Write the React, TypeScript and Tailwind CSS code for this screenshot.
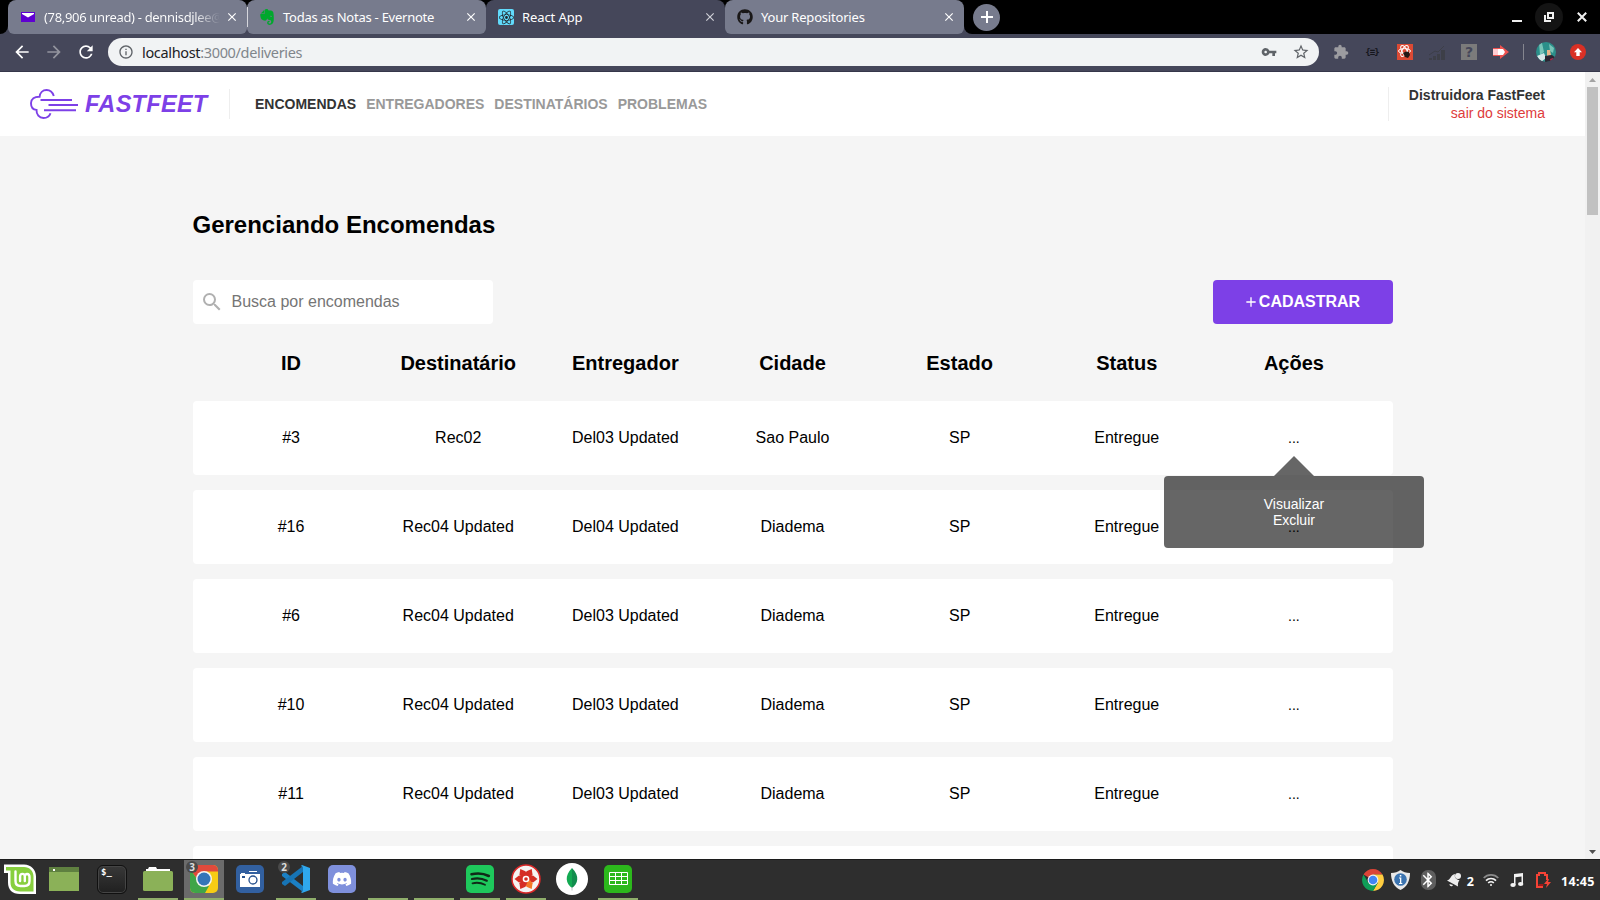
import type { ReactNode } from 'react'
import {
  MdAdd, MdArrowBack, MdArrowForward, MdBluetooth, MdClose, MdExtension,
  MdInfoOutline, MdRefresh, MdSearch, MdStarBorder, MdVpnKey,
} from 'react-icons/md'
import { FaGithub, FaDiscord } from 'react-icons/fa'
import { SiEvernote, SiReact } from 'react-icons/si'

const columns = ['ID', 'Destinatário', 'Entregador', 'Cidade', 'Estado', 'Status', 'Ações']

const deliveries = [
  ['#3', 'Rec02', 'Del03 Updated', 'Sao Paulo', 'SP', 'Entregue'],
  ['#16', 'Rec04 Updated', 'Del04 Updated', 'Diadema', 'SP', 'Entregue'],
  ['#6', 'Rec04 Updated', 'Del03 Updated', 'Diadema', 'SP', 'Entregue'],
  ['#10', 'Rec04 Updated', 'Del03 Updated', 'Diadema', 'SP', 'Entregue'],
  ['#11', 'Rec04 Updated', 'Del03 Updated', 'Diadema', 'SP', 'Entregue'],
]

function Tab({ icon, title, active }: { icon: ReactNode; title: ReactNode; active?: boolean }) {
  return (
    <div className={`flex h-[34px] w-[239px] shrink-0 items-center rounded-t-lg pl-[12px] pr-[8px] ${active ? 'bg-[#45475a]' : 'rounded-b-md bg-[#777b8d]'}`}>
      <span className="flex w-4 shrink-0 justify-center">{icon}</span>
      <span className="ml-2 w-[176px] whitespace-nowrap text-[13px] leading-[34px] text-white">{title}</span>
      <MdClose className={`ml-auto size-[14px] shrink-0 ${active ? 'text-[#d0d1d8]' : 'text-white'}`} />
    </div>
  )
}

function Browser() {
  return (
    <div className="shrink-0 bg-[#45475a] font-['Noto_Sans',sans-serif]">
      <div className="flex h-[34px] items-center">
        <div className="h-full w-2 rounded-br-lg bg-black" />
        <div className="flex h-full bg-[linear-gradient(#000_0_50%,#45475a_50%)]">
          <Tab
            title={<span className="block bg-[linear-gradient(90deg,#fff_85%,transparent_100%)] bg-clip-text tracking-[-0.33px] text-transparent">(78,906 unread) - dennisdjlee@</span>}
            icon={<svg width="14" height="10" viewBox="0 0 14 10"><path fill="#5f01d1" d="M0 0h14v10H0z" /><path fill="#fff" d="M1 1h12v1L7 5.5 1 2z" /></svg>}
          />
          <div className="z-10 my-[7px] -mr-px w-px bg-[#d5d6dc]" />
          <Tab title={<span className="tracking-[-0.25px]">Todas as Notas - Evernote</span>} icon={<SiEvernote className="size-4 text-[#00a82d]" />} />
          <Tab
            active
            title={<span className="tracking-[-0.1px]">React App</span>}
            icon={<span className="flex size-4 items-center justify-center rounded-[2px] bg-[#61dafb]"><SiReact className="size-[15px] text-[#20232a]" /></span>}
          />
          <Tab title={<span className="tracking-[-0.2px]">Your Repositories</span>} icon={<FaGithub className="size-4 text-[#191717]" />} />
        </div>
        <div className="flex h-full flex-1 items-center rounded-bl-lg bg-black pl-[9px] pr-[13px]">
          <span className="flex size-[27px] items-center justify-center rounded-full bg-[#777b8d] text-white">
            <svg width="12" height="12" viewBox="0 0 12 12" stroke="currentColor" strokeWidth="2"><path d="M6 0v12M0 6h12" /></svg>
          </span>
          <span className="ml-auto mt-[8px] h-[2px] w-[10px] bg-[#eee]" />
          <span className="ml-[13px] flex size-7 items-center justify-center rounded-full bg-[#141414]">
            <svg width="10" height="10" viewBox="0 0 10 10" fill="none" stroke="#f1f1f1" strokeWidth="2"><path d="M4 1h5v5H4zM1 3v6h6" /></svg>
          </span>
          <svg className="ml-[14px]" width="10" height="10" viewBox="0 0 10 10" stroke="#f1f1f1" strokeWidth="2"><path d="m.8.8 8.4 8.4M9.2.8.8 9.2" /></svg>
        </div>
      </div>
      <div className="flex h-[38px] items-center border-b border-[#35374a] pb-px pl-[12px] text-white">
        <MdArrowBack className="size-5" />
        <MdArrowForward className="ml-3 size-5 text-[#93949e]" />
        <MdRefresh className="ml-3 size-5" />
        <div className="ml-3 flex h-7 w-[1211px] items-center rounded-full bg-[#f1f3f4] pl-[10px] pr-[9px] text-[#5f6368]">
          <MdInfoOutline className="size-4" />
          <span className="ml-[8px] text-[14.5px] leading-[26px] tracking-[-0.34px] text-[#80868b]"><span className="text-[#202124]">localhost</span>:3000/deliveries</span>
          <MdVpnKey className="ml-auto size-4" />
          <MdStarBorder className="ml-[15px] size-[18px]" />
        </div>
        <MdExtension className="ml-[14px] size-4 text-[#9c9ca0]" />
        <span className="ml-[15px] flex w-4 items-center justify-center whitespace-nowrap font-['DejaVu_Sans_Mono',monospace] text-[9px] font-bold leading-4 tracking-[-1px] text-[#15161c]">{'{≡}'}</span>
        <span className="ml-[17px] flex size-4 items-center justify-center bg-[#db4a34]">
          <svg width="16" height="16" viewBox="0 0 16 16" fill="none" stroke="#fff"><ellipse cx="7.500" cy="7" rx="6" ry="2.400" /><ellipse cx="7.500" cy="7" rx="6" ry="2.400" transform="rotate(60 7.500 7)" /><ellipse cx="7.500" cy="7" rx="6" ry="2.400" transform="rotate(120 7.500 7)" /><path stroke="none" fill="#231815" d="M6 9l3-1.500L12 8l1 3-2 3-3-1z" /></svg>
        </span>
        <svg className="ml-[16px]" width="16" height="16" viewBox="0 0 16 16" fill="#3d3f48"><path d="M0 14h3v2H0zM4 12h3v4H4zM8 10h3v6H8zM12 6h4v10h-4z" /><path d="M0 11 6 7l3 1 6-6" fill="none" stroke="#3d3f48" /></svg>
        <span className="ml-[16px] flex size-4 items-center justify-center bg-[#7b7b7b] font-['DejaVu_Sans',sans-serif] text-[14px] font-bold leading-4 text-[#45475a]">?</span>
        <svg className="ml-[16px]" width="16" height="14" viewBox="0 0 16 14"><path fill="#ef5350" d="M0 3h7V0l9 7-9 7v-3H0z" /><path fill="#ffcdd2" d="M0 4h5v6H0z" /><path fill="#fff" d="M5 4h5l2 3-2 3H5z" /></svg>
        <span className="ml-[14px] h-4 w-px bg-[#85868f]" />
        <svg className="ml-[12px]" width="20" height="20" viewBox="0 0 20 20">
          <clipPath id="avatar"><circle cx="10" cy="10" r="10" /></clipPath>
          <g clipPath="url(#avatar)"><path fill="#2b8f8a" d="M0 0h20v20H0z" /><path fill="#78c4b8" d="M3 1h3l2 9-4 3zM13 2l5 4-1 5-3-2z" /><path fill="#d8e8e8" d="M1 14l7-3 2 5-5 4z" /><path fill="#e8b489" d="M11 8h3l1 5-4 1z" /><path fill="#2c2632" d="M9 14l7-1 4 3-4 4H9z" /><path fill="#b3264d" d="m14 17 3-1 1 3-3 1z" /></g>
        </svg>
        <span className="ml-[14px] flex size-4 items-center justify-center rounded-full bg-[#d93025]"><svg width="8" height="8" viewBox="0 0 8 8" fill="#fff"><path d="m4 0 4 4.200H5.700V8H2.300V4.200H0z" /></svg></span>
      </div>
    </div>
  )
}

function Logo() {
  return (
    <div className="flex items-center">
      <svg width="48" height="30" viewBox="0 0 48 30" fill="none" stroke="#7d40e7" strokeWidth="1.900">
        <path d="M23.800 7C22.600 3.300 20 1 16.600 1c-3.900 0-6.700 2.800-7 6.700C4.500 7.500 1 10 1 14.200c0 4 2.400 6.400 5.500 6.700-.2 4.700 2.700 8.100 7 8.100 3.500 0 6-1.700 7-4.800" />
        <path d="M10.500 11H42M18.500 16H48M14 21.300h32" />
      </svg>
      <span className="ml-[7px] w-[124px] whitespace-nowrap text-[23.500px] font-bold italic leading-[30px] tracking-[0.3px] text-[#7d40e7]">FASTFEET</span>
    </div>
  )
}

function Header() {
  return (
    <header className="flex h-16 items-center bg-white pl-[30px] pr-[40px] text-[14px] font-bold">
      <Logo />
      <div className="ml-[20px] h-[30px] w-px bg-[#eee]" />
      <nav className="ml-[25px] flex gap-[10px] text-[#999]">
        <a className="text-[#333]">ENCOMENDAS</a>
        <a>ENTREGADORES</a>
        <a>DESTINATÁRIOS</a>
        <a>PROBLEMAS</a>
      </nav>
      <div className="ml-auto flex h-[34px] flex-col justify-center border-l border-[#eee] pl-[20px] text-right leading-[16px]">
        <strong className="text-[#333]">Distruidora FastFeet</strong>
        <span className="mt-[2px] font-normal text-[#de3b3b]">sair do sistema</span>
      </div>
    </header>
  )
}

function ActionMenu() {
  return (
    <div className="absolute left-1/2 top-[75px] z-10 flex h-[72px] w-[260px] -translate-x-1/2 flex-col items-center rounded bg-black/60 pt-[20px] text-[14px] leading-[16px] text-white">
      <svg className="absolute -top-[20px] left-[110px]" width="40" height="20"><path d="M20 0 40 20H0z" fill="rgba(0,0,0,.6)" /></svg>
      <span>Visualizar</span>
      <span>Excluir</span>
    </div>
  )
}

function Page() {
  return (
    <div className="h-full min-w-0 flex-1 overflow-hidden bg-[#f5f5f5]">
      <Header />
      <main className="ml-[192.5px] flex w-[1200px] flex-col pt-[74px]">
        <h1 className="text-[24px] font-bold leading-[30px] text-black">Gerenciando Encomendas</h1>
        <div className="mt-[40px] flex justify-between">
          <div className="flex h-11 w-[300px] items-center rounded bg-white pl-[7px] text-[16px] text-[#757575]">
            <MdSearch className="size-6 text-[#b0b0b0]" />
            <span className="ml-[8px]">Busca por encomendas</span>
          </div>
          <button className="flex h-11 w-[180px] items-center justify-center rounded bg-[#7d40e7] pr-[2px] text-[16px] font-bold text-white">
            <MdAdd className="size-4" />CADASTRAR
          </button>
        </div>
        <div className="mt-[24px] grid grid-cols-7 px-[15px] text-center text-[20px] font-bold leading-[30px] text-black">
          {columns.map((c) => <span key={c}>{c}</span>)}
        </div>
        <div className="mt-[23px] flex flex-col gap-[15px]">
          {deliveries.map((d, i) => (
            <div key={d[0]} className="grid h-[74px] grid-cols-7 rounded bg-white px-[15px] text-center text-[16px] leading-[73px] text-black">
              {d.map((v, j) => <span key={j}>{v}</span>)}
              <span className="relative">
                <span className="text-[14px]">...</span>
                {i === 0 && <ActionMenu />}
              </span>
            </div>
          ))}
          <div className="h-[74px] rounded bg-white" />
        </div>
      </main>
    </div>
  )
}

function Scrollbar() {
  return (
    <div className="flex h-full w-[15px] shrink-0 flex-col items-center bg-[#f1f1f1]">
      <svg width="15" height="15" viewBox="0 0 15 15"><path fill="#a3a3a3" d="M4 10h7L7.500 6z" /></svg>
      <div className="h-[128px] w-[11px] bg-[#c1c1c1]" />
      <svg className="mt-auto" width="15" height="15" viewBox="0 0 15 15"><path fill="#505050" d="M4 6h7l-3.500 4z" /></svg>
    </div>
  )
}

function Chrome({ size }: { size: number }) {
  return (
    <svg width={size} height={size} viewBox="0 0 22 22">
      <path fill="#db4437" d="M11 11 1.500 5.500A11 11 0 0 1 20.500 5.500H11z" />
      <path fill="#ffcd40" d="M20.500 5.500A11 11 0 0 1 11 22l4.800-8.200L11 5.500z" />
      <path fill="#0f9d58" d="M1.500 5.500A11 11 0 0 0 11 22l4.800-8.200H6.300z" />
      <circle cx="11" cy="11" r="5.400" fill="#f4f4f4" /><circle cx="11" cy="11" r="4.300" fill="#4285f4" />
    </svg>
  )
}

function Task({ children, open, active, badge }: { children?: ReactNode; open?: boolean; active?: boolean; badge?: string }) {
  return (
    <div className={`relative flex h-10 w-10 shrink-0 items-center justify-center border-b-2 ${open ? 'border-[#8fae6b]' : 'border-transparent'} ${active ? 'bg-[#6b6b6b]' : ''}`}>
      {children}
      {badge && <span className="absolute left-[2px] top-px flex size-3 items-center justify-center rounded-full bg-[#4a4a4a] text-[10px] font-bold leading-3 text-[#ddd]">{badge}</span>}
    </div>
  )
}

function Taskbar() {
  return (
    <div className="flex h-[41px] shrink-0 items-center border-t border-[#1c1c1c] bg-[#2e2e2e] font-['Noto_Sans',sans-serif]">
      <div className="flex gap-[6px]">
        <Task>
          <svg width="32" height="30" viewBox="0 0 32 30"><path fill="#fff" d="M0 .5h20c7 0 12 5 12 12V30H16C8 30 4 25.500 4 18.500V9H0z" /><path fill="#87cf3e" d="M2 3h18c5.500 0 9.500 4 9.500 9.500v15H16c-6 0-9.500-3.500-9.500-9V6.500H2z" /><path fill="none" stroke="#fff" strokeWidth="2.400" strokeLinecap="round" strokeLinejoin="round" d="M11.500 7.500v9.500c0 3.500 2 5 5 5h4c3.500 0 5-2 5-5v-4c0-4-4.700-4-4.700-.5V17v-4.500c0-3.500-4.700-3.500-4.700 0V17" /></svg>
        </Task>
        <Task>
          <svg className="mr-1" width="30" height="24" viewBox="0 0 30 24"><path fill="#8bb158" d="M0 0h30v24H0z" /><path fill="#5f8040" d="M0 0h30v5H0z" /><path fill="#fff" d="M4 2h2v2H4z" /></svg>
        </Task>
        <Task>
          <span className="h-[29px] w-[30px] rounded-[6px] border border-[#101010] bg-linear-to-b from-[#383838] to-[#202020] pl-[3px] font-['DejaVu_Sans_Mono',monospace] text-[9px] font-bold leading-[13px] text-white shadow-[inset_0_0_0_1px_#454545]">$_</span>
        </Task>
        <Task open>
          <svg width="30" height="24" viewBox="0 0 30 24"><path fill="#fff" d="M3 5V2h2l1-2h7l1 2h13v3z" /><rect y="4" width="30" height="20" rx="1.500" fill="#8bb158" /></svg>
        </Task>
        <Task open active badge="3">
          <svg width="28" height="28" viewBox="0 0 28 28"><clipPath id="sq"><rect width="28" height="28" rx="5" /></clipPath><g clipPath="url(#sq)"><path fill="#f7cc14" d="M0 0h28v28H0z" /><path fill="#e04a3c" d="M0 0h28v6.500H14L7 14 0 4z" /><path fill="#3fa548" d="M0 4l7 10 5 7h7l-4 7H0z" /></g><circle cx="14" cy="14" r="8" fill="#f4f4f4" /><circle cx="14" cy="14" r="6.500" fill="#3475b8" /></svg>
        </Task>
        <Task>
          <svg width="28" height="28" viewBox="0 0 28 28"><rect width="28" height="28" rx="5" fill="#3260a0" /><path fill="#fff" d="M5 8h4v1h15v13H4V9h1zM13 6h8v1h-8z" /><circle cx="17" cy="15" r="4" fill="none" stroke="#28528e" strokeWidth="1.300" /><path fill="#28528e" d="M6 11h3v2H6z" /></svg>
        </Task>
        <Task open badge="2">
          <svg width="28" height="28" viewBox="0 0 28 28"><path fill="#1b80c4" d="M0 9l3-2 18 14v6L0 11z" /><path fill="#1774b5" d="M0 19l3 2L21 7V1L0 17z" /><path fill="#2fa8ee" d="m20 0 8 3v22l-8 3-1-1 2-1V2l-2-1z" /></svg>
        </Task>
        <Task><span className="flex size-7 items-center justify-center rounded-[5px] bg-[#7f90dc]"><FaDiscord className="size-5 text-white" /></span></Task>
        <Task open />
        <Task open />
        <Task open>
          <svg width="28" height="28" viewBox="0 0 28 28"><rect width="28" height="28" rx="5" fill="#1ec95c" /><g fill="none" stroke="#102a18" strokeLinecap="round"><path strokeWidth="2.600" d="M5.500 9.300c6-1.500 12-1 17.300 1.700" /><path strokeWidth="2.200" d="M6 14c5-1.300 10-.8 14.800 1.700" /><path strokeWidth="1.800" d="M6.500 18.300c4.300-1 8.500-.6 12.500 1.500" /></g></svg>
        </Task>
        <Task open>
          <svg width="30" height="30" viewBox="0 0 30 30"><circle cx="15" cy="15" r="14" fill="#f5f3f2" stroke="#da2727" strokeWidth="1.500" />
            {[30, 90, 150, 210, 270, 330].map((a) => <path key={a} transform={`rotate(${a} 15 15)`} fill={a === 150 ? '#f37726' : '#d52d24'} d="M12.500 14 11.500 8 15 3.500 18.500 8 17.500 14z" />)}
            <circle cx="15" cy="15" r="3.300" fill="#fff" /><circle cx="15" cy="15" r="1.800" fill="#d52d24" /></svg>
        </Task>
        <Task>
          <svg width="32" height="32" viewBox="0 0 32 32"><circle cx="16" cy="16" r="16" fill="#fff" /><path fill="#13aa52" d="M16 5c-8 8-6 16 0 20z" /><path fill="#118d4d" d="M16 5c8 8 6 16 0 20z" /><path stroke="#b8c4c2" d="M16 24v3.500" /></svg>
        </Task>
        <Task open>
          <svg width="28" height="28" viewBox="0 0 28 28"><rect width="28" height="28" rx="5" fill="#2cb81c" /><path fill="none" stroke="#fff" d="M5.500 7.500h18v12h-18zM5.500 11.500h18M5.500 15.500h18M11.500 7.500v12M17.500 7.500v12" /></svg>
        </Task>
      </div>
      <div className="ml-auto flex items-center pr-[5px] text-white">
        <Chrome size={22} />
        <svg className="ml-[7px]" width="19" height="20" viewBox="0 0 19 20"><path fill="#e9e9e9" d="M9.500 0C12 2 15 3 19 3c0 8-3 14-9.500 17C3 17 0 11 0 3c4 0 7-1 9.500-3z" /><circle cx="9.500" cy="9.500" r="6.300" fill="#3c74b0" /><path fill="#fff" d="M8 7.500h2.300V13h1v1H8v-1h1V8.500H8zM8.800 5h1.500v1.500H8.800z" /></svg>
        <span className="ml-[11px] flex h-5 w-[15px] items-center justify-center rounded-[7px] bg-[#5f5f5f]"><MdBluetooth className="size-[18px] shrink-0" /></span>
        <svg className="ml-[10px]" width="16" height="16" viewBox="0 0 16 16" fill="#eee"><circle cx="12" cy="4" r="3" /><path d="M1 8.500C4.500 8 4.500 3 9 2c-1 3.500 1.500 6 4.500 6-1 2-2 3-1.500 6.500zM3.500 12l3.500 1c-.8 2-3.500 1.500-3.500-1z" /></svg>
        <span className="ml-[5px] mt-[3px] text-[12.5px] font-bold leading-5">2</span>
        <svg className="ml-[9px]" width="16" height="14" viewBox="0 0 16 14" fill="none" stroke="#f3f3f3" strokeWidth="1.700"><path stroke="#8b8b8b" d="M.7 5a10 10 0 0 1 14.600 0" /><path d="M3 7.600a7 7 0 0 1 10 0M5.200 10a4 4 0 0 1 5.600 0" /><circle cx="8" cy="12" r="1" fill="#f3f3f3" stroke="none" /></svg>
        <svg className="ml-[11px]" width="14" height="14" viewBox="0 0 14 14" fill="#f3f3f3"><path d="M4 1 13 0v11h-1.500V3.500l-6 .8V12H4z" /><ellipse cx="3" cy="12" rx="2.700" ry="1.900" /><ellipse cx="10.700" cy="11" rx="2.700" ry="1.900" /></svg>
        <svg className="ml-[12px]" width="15" height="16" viewBox="0 0 15 16" fill="none" stroke="#f44336" strokeWidth="2"><path d="M7 15H1V3h2V1h6v2h2v5" /><path fill="#f44336" stroke="none" d="m12 7-4 5h3l-1 4 5-6h-3l1-3z" /><path stroke="#a01818" d="M2.500 13h5" /></svg>
        <span className="ml-[10px] mt-[3px] w-[34px] whitespace-nowrap text-[12.500px] font-bold leading-5 tracking-[0.300px]">14:45</span>
      </div>
    </div>
  )
}

export default function App() {
  return (
    <div className="flex h-[900px] w-[1600px] flex-col overflow-hidden font-['Liberation_Sans',Arial,sans-serif]">
      <Browser />
      <div className="flex min-h-0 flex-1">
        <Page />
        <Scrollbar />
      </div>
      <Taskbar />
    </div>
  )
}
